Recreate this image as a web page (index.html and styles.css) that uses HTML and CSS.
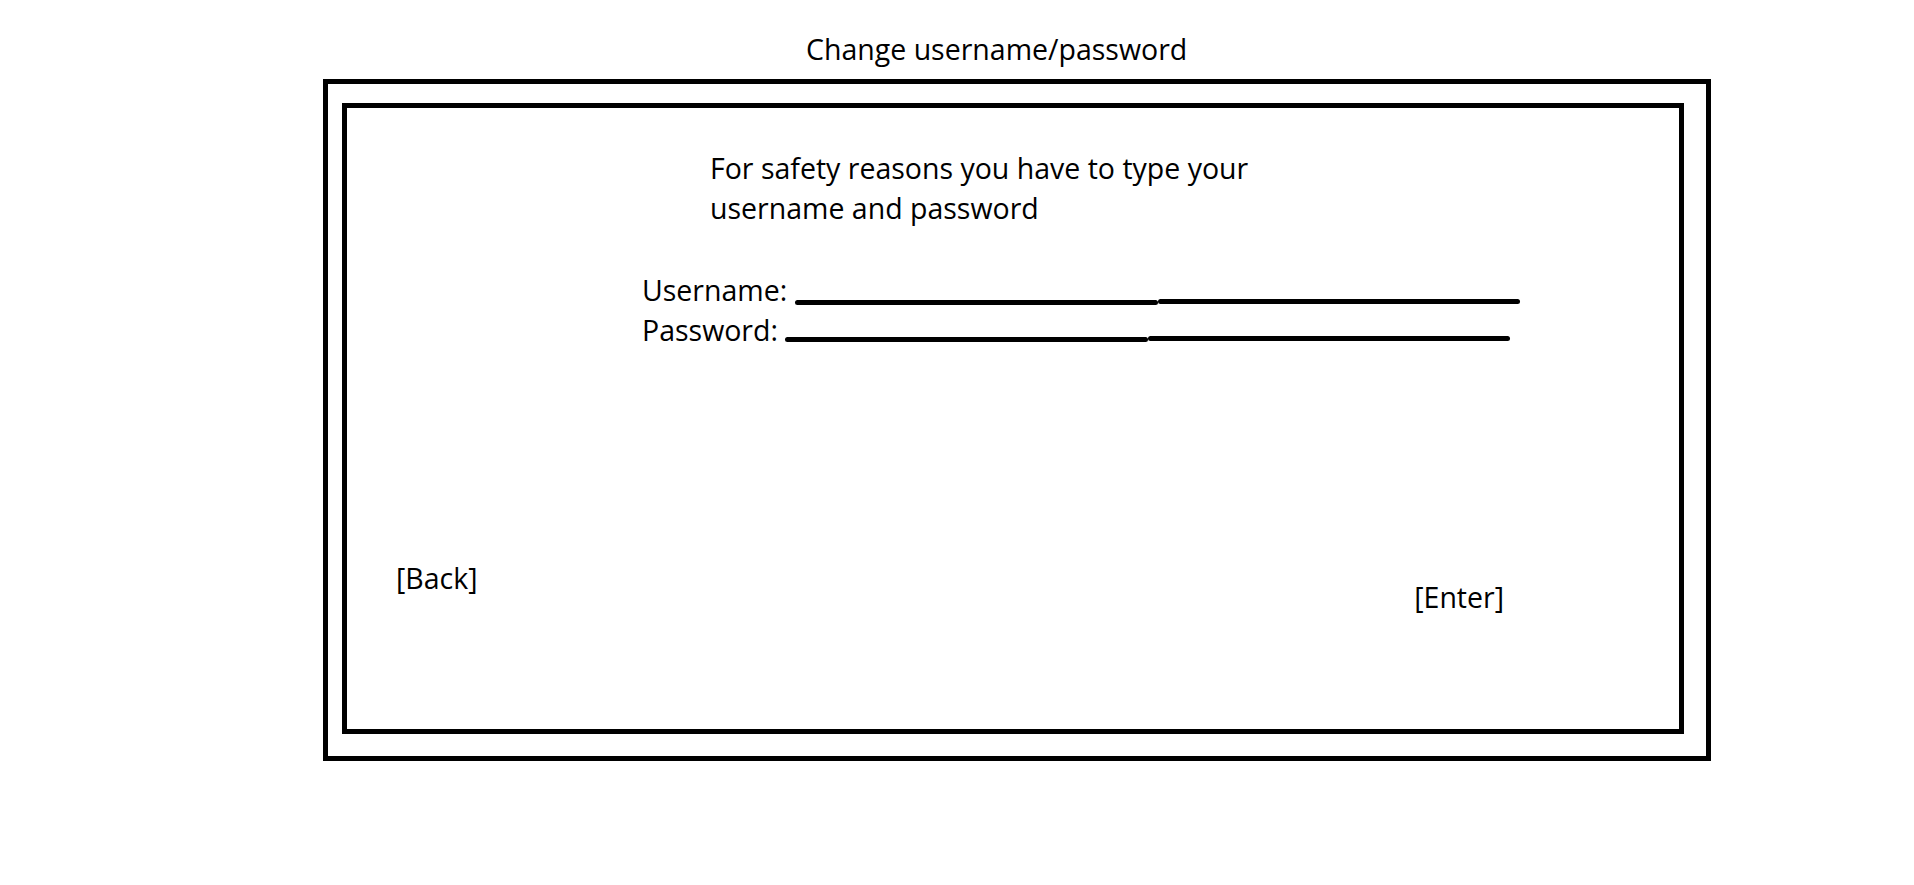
FILE: index.html
```html
<!DOCTYPE html>
<html lang="en">
<head>
<meta charset="utf-8">
<title>Change username/password</title>
<link rel="stylesheet" href="styles.css">
</head>
<body>
  <div class="title">Change username/password</div>
  <div class="outer">
    <div class="inner">
      <p class="notice">For safety reasons you have to type your<br>username and password</p>
      <div class="fields">
        <div class="field user">
          <span class="label">Username:</span>
          <span class="line seg-a"></span><span class="line seg-b"></span>
        </div>
        <div class="field pass">
          <span class="label">Password:</span>
          <span class="line seg-a"></span><span class="line seg-b"></span>
        </div>
      </div>
      <div class="actions">
        <span class="action back">[Back]</span>
        <span class="action enter">[Enter]</span>
      </div>
    </div>
  </div>
</body>
</html>
```

FILE: styles.css
```css
html, body {
  margin: 0;
  padding: 0;
  background: #ffffff;
}

body {
  font-family: "Open Sans", "Noto Sans", sans-serif;
  font-size: 28.5px;
  color: #000000;
  width: 1914px;
  height: 885px;
  overflow: hidden;
}

.title {
  padding: 31px 0 0 806px;
  line-height: 36px;
  height: 36px;
}

.outer {
  box-sizing: border-box;
  margin: 12px 0 0 323px;
  width: 1388px;
  height: 682px;
  border: 5px solid #000;
  padding: 19px 22px 22px 14px;
}

.inner {
  box-sizing: border-box;
  width: 1342px;
  height: 631px;
  border: 5px solid #000;
  display: flex;
  flex-direction: column;
}

.notice {
  margin: 40px 0 0 363px;
  line-height: 40px;
}

.fields {
  margin: 42px 0 0 295px;
  display: flex;
  flex-direction: column;
}

.field {
  line-height: 40px;
  height: 40px;
  white-space: nowrap;
}

.label {
  margin-right: 0;
}

.line {
  display: inline-block;
  background: #000;
  border-radius: 2.5px;
  height: 5px;
}

.seg-a {
  width: 363px;
}

.seg-b {
  width: 362px;
}

.user .seg-a {
  vertical-align: -4.3px;
}

.user .seg-b {
  vertical-align: -3px;
}

.pass .seg-a {
  vertical-align: -1px;
}

.pass .seg-b {
  vertical-align: 0px;
}

.actions {
  margin: 210px 175px 0 49px;
  display: flex;
  justify-content: space-between;
  align-items: flex-start;
  line-height: 36px;
}

.enter {
  margin-top: 19px;
}
```
